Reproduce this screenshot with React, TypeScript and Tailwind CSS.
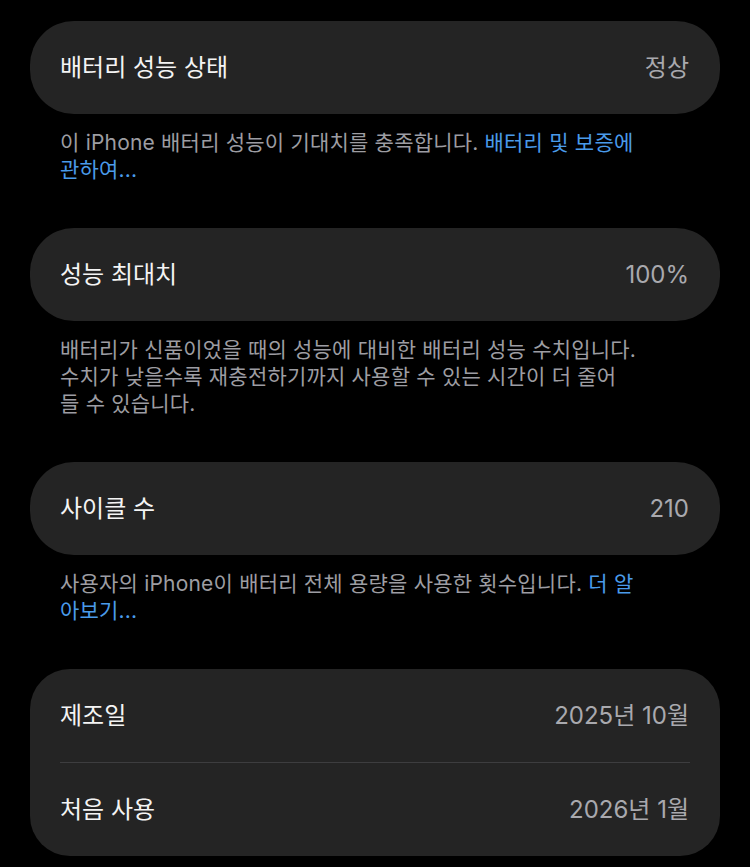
import React from 'react';

interface RowProps {
  label: string;
  value: string;
}

const Row: React.FC<RowProps> = ({ label, value }) => (
  <div className="h-[93px] flex items-center justify-between pl-[30px] pr-[31px]">
    <span className="text-[24px] text-[#f4f4f4]">{label}</span>
    <span className="text-[24px] text-[#a9a9ae]">{value}</span>
  </div>
);

const Footer: React.FC<{ children: React.ReactNode }> = ({ children }) => (
  <p className="mt-[15px] mb-[45px] pl-[30px] pr-[72px] text-[21px] leading-[27px] tracking-[0.2px] text-[#9d9da2]">
    {children}
  </p>
);

const Link: React.FC<{ children: React.ReactNode }> = ({ children }) => (
  <span className="text-[#4a9bea]">{children}</span>
);

export default function App() {
  return (
    <div
      className="min-h-[867px] bg-black px-[30px] pt-[21px]"
      style={{ fontFamily: 'Inter, "Noto Sans CJK KR", sans-serif' }}
    >
      <div className="bg-[#242424] rounded-[44px]">
        <Row label="배터리 성능 상태" value="정상" />
      </div>
      <Footer>
        이 iPhone 배터리 성능이 기대치를 충족합니다. <Link>배터리 및 보증에 관하여...</Link>
      </Footer>

      <div className="bg-[#242424] rounded-[44px]">
        <Row label="성능 최대치" value="100%" />
      </div>
      <Footer>
        배터리가 신품이었을 때의 성능에 대비한 배터리 성능 수치입니다. 수치가 낮을수록 재충전하기까지 사용할 수 있는 시간이 더 줄어
        <br />
        들 수 있습니다.
      </Footer>

      <div className="bg-[#242424] rounded-[44px]">
        <Row label="사이클 수" value="210" />
      </div>
      <Footer>
        사용자의 iPhone이 배터리 전체 용량을 사용한 횟수입니다. <Link>더 알아보기...</Link>
      </Footer>

      <div className="bg-[#242424] rounded-[40px]">
        <Row label="제조일" value="2025년 10월" />
        <div className="mx-[30px] h-px bg-[#3d3d3f]" />
        <Row label="처음 사용" value="2026년 1월" />
      </div>
    </div>
  );
}
